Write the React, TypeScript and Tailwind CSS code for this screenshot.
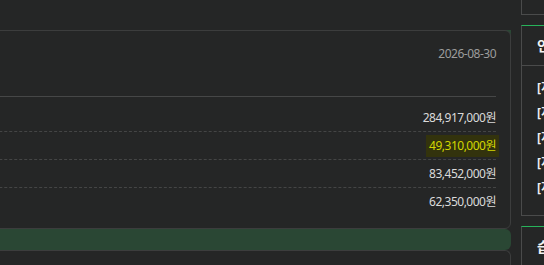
const rows = [
  { value: "284,917,000원" },
  { value: "49,310,000원", highlight: true },
  { value: "83,452,000원" },
  { value: "62,350,000원" },
]

const notices = [
  "[지원사업] 2026년 상반기 공고 안내",
  "[지원사업] 신청서 접수 마감 임박",
  "[지원사업] 중간 점검 일정 공지",
  "[지원사업] 정산 서류 제출 안내",
  "[지원사업] 결과 보고회 개최",
]

const App = () => {
  return (
    <div
      className="w-[544px] h-[265px] overflow-hidden bg-[#252626] text-[#d6d6d6]"
      style={{ fontFamily: '"Noto Sans", "Noto Sans CJK KR", sans-serif' }}
    >
      <div className="flex -ml-[300px]">
        {/* Main column */}
        <div className="w-[811px] shrink-0 pt-[30px]">
          <div className="relative">
            <div className="absolute top-0 right-0 w-[6px] h-[6px] bg-[#2a4734]" />
            <div className="relative rounded-[6px] border border-[#3c3d3d] bg-[#252626] px-[14px] pb-[12px]">
              {/* Header */}
              <div className="flex justify-end items-start h-[66px] pt-[15px] border-b border-[#464747]">
                <span className="text-[12px] leading-[16px] tracking-[-0.5px] text-[#9c9c9c]">2026-08-30</span>
              </div>
              {/* Rows */}
              <div className="pt-[7px]">
                {rows.map((row, i) => (
                  <div
                    key={row.value}
                    className={
                      "flex justify-end items-center h-[28px] " +
                      (i < rows.length - 1 ? "border-b border-dashed border-[#444545]" : "")
                    }
                  >
                    {row.highlight ? (
                      <span className="bg-[#33330d] px-[3px] -mr-[3px] py-[3px] text-[12px] leading-[16px] tracking-[-0.5px] text-[#d2d600]">
                        {row.value}
                      </span>
                    ) : (
                      <span className="text-[12px] leading-[16px] tracking-[-0.5px] text-[#dadada]">
                        {row.value}
                      </span>
                    )}
                  </div>
                ))}
              </div>
            </div>
          </div>

          {/* Green band */}
          <div className="h-[21px] rounded-r-[6px] bg-[#2a4734]" />

          <div className="h-[40px] rounded-t-[6px] border border-b-0 border-[#3c3d3d]" />
        </div>

        {/* Sidebar */}
        <div className="w-[240px] shrink-0 ml-[10px]">
          <div className="h-[15px] border-l border-b border-[#4a4b4b]" />

          <div className="mt-[10px] border-l border-t border-b border-[#4a4b4b] border-t-[#27b35a]">
            <div className="h-[40px] flex items-center pl-[15px] border-b border-[#4a4b4b] text-[14px] font-bold text-[#f2f2f2] whitespace-nowrap">
              인기 공지사항
            </div>
            <ul className="pt-[9px] pb-[15px] pl-[15px]">
              {notices.map((n) => (
                <li key={n} className="h-[25px] flex items-center text-[12px] font-bold text-[#f0f0f0] whitespace-nowrap">
                  {n}
                </li>
              ))}
            </ul>
          </div>

          <div className="mt-[10px] h-[60px] border-l border-t border-[#4a4b4b] border-t-[#27b35a] pl-[15px] pt-[9px] text-[14px] font-bold text-[#f2f2f2] whitespace-nowrap">
            습관 체크리스트
          </div>
        </div>
      </div>
    </div>
  )
}

export default App
